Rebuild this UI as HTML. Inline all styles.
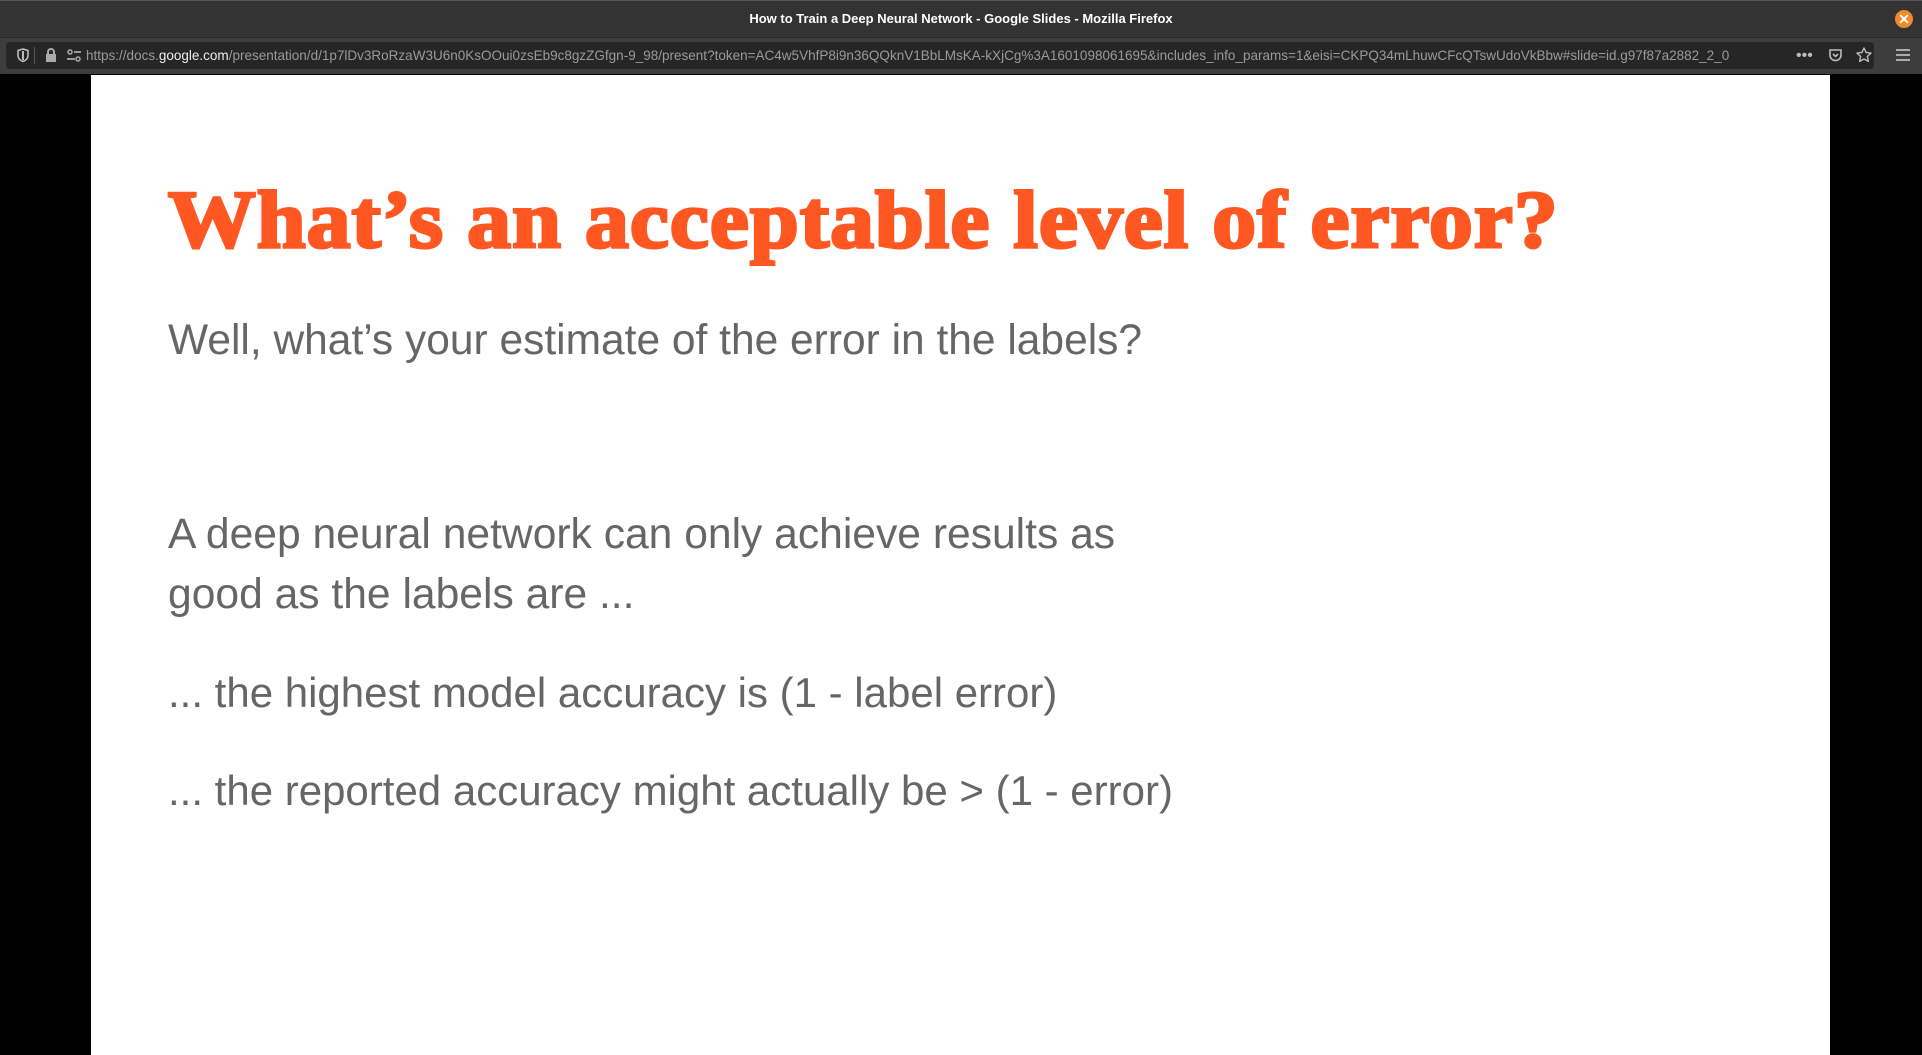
<!DOCTYPE html>
<html><head><meta charset="utf-8"><style>
body{margin:0;width:1922px;height:1055px;background:#000;position:relative;overflow:hidden;font-family:"Liberation Sans",sans-serif}
.tb{position:absolute;left:0;top:0;width:1922px;height:37px;background:#333;border-top:1px solid #555;box-sizing:border-box;color:#fff;font-size:13px;font-weight:bold;text-align:center;line-height:36px}
.nav{position:absolute;left:0;top:37px;width:1922px;height:37px;background:#3d3d3d;border-top:1px solid #2a2a2a;box-sizing:border-box}
.url{position:absolute;left:6px;top:4px;width:1868px;height:27px;background:#262626;border-radius:4px;color:#9a9a9a;font-size:14px;line-height:27px}
.slide{position:absolute;left:91px;top:75px;width:1739px;height:980px;background:#fff}
.t{position:absolute;white-space:nowrap}
</style></head><body>
<div class="tb">How to Train a Deep Neural Network - Google Slides - Mozilla Firefox
<div style="position:absolute;right:9px;top:9px;width:18px;height:18px;border-radius:50%;background:#f28a2b;color:#fff;font-size:14px;line-height:18px">✕</div></div>
<div class="nav"><div class="url">
<svg style="position:absolute;left:10px;top:6px" width="14" height="15" viewBox="0 0 14 15"><path d="M2 2.5 7 1l5 1.5v5c0 3-2.5 5-5 6-2.5-1-5-3-5-6z" fill="none" stroke="#bbb" stroke-width="1.6"/><path d="M7 3v9" stroke="#bbb" stroke-width="2"/></svg>
<div style="position:absolute;left:28px;top:5px;width:1px;height:17px;background:#555"></div>
<svg style="position:absolute;left:38px;top:5px" width="14" height="16" viewBox="0 0 14 16"><rect x="2" y="7" width="10" height="8" fill="#aaa"/><path d="M4 7V5a3 3 0 0 1 6 0v2" fill="none" stroke="#aaa" stroke-width="2"/></svg>
<svg style="position:absolute;left:60px;top:7px" width="16" height="14" viewBox="0 0 16 14"><circle cx="4" cy="3" r="2" fill="none" stroke="#aaa" stroke-width="1.5"/><path d="M8 3h7M1 10h8" stroke="#aaa" stroke-width="1.8"/><circle cx="12" cy="10" r="2" fill="none" stroke="#aaa" stroke-width="1.5"/></svg>
<span style="position:absolute;left:80px;transform:scaleX(0.965);transform-origin:left">https://docs.<span style="color:#eee">google.com</span>/presentation/d/1p7lDv3RoRzaW3U6n0KsOOui0zsEb9c8gzZGfgn-9_98/present?token=AC4w5VhfP8i9n36QQknV1BbLMsKA-kXjCg%3A1601098061695&amp;includes_info_params=1&amp;eisi=CKPQ34mLhuwCFcQTswUdoVkBbw#slide=id.g97f87a2882_2_0</span>
<span style="position:absolute;left:1790px;color:#bbb;font-size:16px">•••</span>
<svg style="position:absolute;left:1822px;top:6px" width="15" height="15" viewBox="0 0 15 15"><path d="M2 2h11v5a5.5 5.5 0 0 1-11 0z" fill="none" stroke="#bbb" stroke-width="1.6"/><path d="M5 6l2.5 2.5L10 6" fill="none" stroke="#bbb" stroke-width="1.6"/></svg>
<svg style="position:absolute;left:1850px;top:5px" width="16" height="16" viewBox="0 0 16 16"><path d="M8 1l2.1 4.5 4.9.6-3.6 3.4.9 4.9L8 12 3.7 14.4l.9-4.9L1 6.1l4.9-.6z" fill="none" stroke="#bbb" stroke-width="1.4" stroke-linejoin="round"/></svg>
</div>
<svg style="position:absolute;left:1896px;top:11px" width="14" height="12"><path d="M0 1h14M0 6h14M0 11h14" stroke="#bbb" stroke-width="1.8"/></svg>
</div>
<div class="slide">
<div class="t" style="left:77px;top:98px;font-family:'Liberation Serif',serif;font-weight:900;font-size:82px;color:#ff5722;-webkit-text-stroke:3px #ff5722;letter-spacing:1px;transform:scaleX(1.07);transform-origin:left">What’s an acceptable level of error?</div>
<div class="t" style="left:77px;top:242px;font-size:42.5px;color:#666">Well, what’s your estimate of the error in the labels?</div>
<div class="t" style="left:77px;top:429px;font-size:42.6px;color:#666;line-height:60px">A deep neural network can only achieve results as<br>good as the labels are ...</div>
<div class="t" style="left:77px;top:594px;font-size:42px;color:#666">... the highest model accuracy is (1 - label error)</div>
<div class="t" style="left:77px;top:692px;font-size:42px;color:#666">... the reported accuracy might actually be &gt; (1 - error)</div>
</div>
</body></html>
